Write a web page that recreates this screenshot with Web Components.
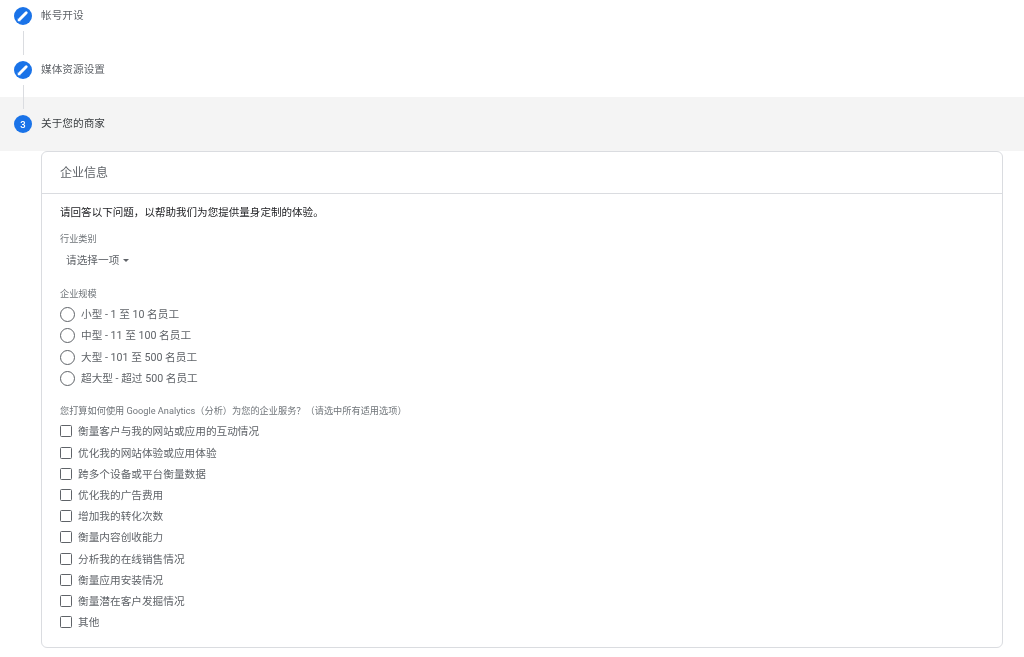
<!DOCTYPE html>
<html lang="zh-CN">
<head>
<meta charset="utf-8">
<title>关于您的商家</title>
<style>
  html, body { margin: 0; background: #fff; }
  body { font-family: Roboto, "Noto Sans CJK SC", sans-serif; overflow: hidden; height: 657px; filter: blur(0.3px); }
</style>
</head>
<body>
<setup-step state="done" class="first">帐号开设</setup-step>
<setup-step state="done" line>媒体资源设置</setup-step>
<setup-step state="current" line number="3">关于您的商家</setup-step>
<info-card heading="企业信息">
  <p-intro>请回答以下问题，以帮助我们为您提供量身定制的体验。</p-intro>
  <field-label style="height:19px">行业类别</field-label>
  <select-menu>请选择一项</select-menu>
  <field-label style="margin-top:10px;height:21px">企业规模</field-label>
  <radio-option>小型 - 1 至 10 名员工</radio-option>
  <radio-option>中型 - 11 至 100 名员工</radio-option>
  <radio-option>大型 - 101 至 500 名员工</radio-option>
  <radio-option>超大型 - 超过 500 名员工</radio-option>
  <field-label style="margin-top:11px;height:21px">您打算如何使用 Google Analytics（分析）为您的企业服务？（请选中所有适用选项）</field-label>
  <check-option>衡量客户与我的网站或应用的互动情况</check-option>
  <check-option>优化我的网站体验或应用体验</check-option>
  <check-option>跨多个设备或平台衡量数据</check-option>
  <check-option>优化我的广告费用</check-option>
  <check-option>增加我的转化次数</check-option>
  <check-option>衡量内容创收能力</check-option>
  <check-option>分析我的在线销售情况</check-option>
  <check-option>衡量应用安装情况</check-option>
  <check-option>衡量潜在客户发掘情况</check-option>
  <check-option>其他</check-option>
</info-card>

<script>
// one vertical stepper row
class SetupStep extends HTMLElement {
  constructor() {
    super();
    const shadow = this.attachShadow({ mode: 'open' });
    const done = this.getAttribute('state') === 'done';
    const badge = done
      ? `<svg viewBox="0 0 24 24" width="14" height="14"><path fill="none" stroke="#fff" stroke-width="5" stroke-linecap="round" d="M6.5 17.5 17.5 6.5"/><path fill="#fff" d="M3 21v-5l5 5z"/></svg>`
      : this.getAttribute('number');
    shadow.innerHTML = `
      <style>
        :host { display: block; height: 54px; position: relative; }
        :host(.first) { height: 43px; }
        :host([state="current"]) { background: #f4f4f4; }
        .row { display: flex; align-items: center; gap: 9px; height: 54px; padding-left: 14px; box-sizing: border-box; }
        :host(.first) .row { height: 32px; }
        .badge {
          width: 18px; height: 18px; border-radius: 50%; background: #1a73e8; color: #fff;
          display: flex; align-items: center; justify-content: center;
          font-size: 9.5px; font-weight: 500;
        }
        .label { font-size: 10.67px; color: #5f6368; white-space: nowrap; margin-bottom: 4px; }
        :host([state="current"]) .label { color: #3c4043; }
        .line { display: none; position: absolute; left: 23px; top: -12px; width: 1px; height: 24px; background: #dadce0; }
        :host([line]) .line { display: block; }
      </style>
      <div class="line"></div>
      <div class="row"><div class="badge">${badge}</div><div class="label"><slot></slot></div></div>
    `;
  }
}
customElements.define('setup-step', SetupStep);

class InfoCard extends HTMLElement {
  constructor() {
    super();
    const shadow = this.attachShadow({ mode: 'open' });
    shadow.innerHTML = `
      <style>
        :host {
          display: block; box-sizing: border-box; width: 962px; height: 497px; margin-left: 41px;
          border: 1px solid #dadce0; border-radius: 6px; background: #fff;
        }
        .head {
          height: 42px; box-sizing: border-box; padding: 0 0 2px 18px; display: flex; align-items: center;
          font-size: 12px; color: #5f6368; border-bottom: 1px solid #dadce0;
        }
        .body { padding: 0 18px; }
      </style>
      <div class="head">${this.getAttribute('heading')}</div>
      <div class="body"><slot></slot></div>
    `;
  }
}
customElements.define('info-card', InfoCard);

class PIntro extends HTMLElement {
  constructor() {
    super();
    this.attachShadow({ mode: 'open' }).innerHTML = `
      <style>
        :host { display: flex; align-items: center; height: 34px; font-size: 10.55px; color: #202124; white-space: nowrap; }
      </style><slot></slot>`;
  }
}
customElements.define('p-intro', PIntro);

class FieldLabel extends HTMLElement {
  constructor() {
    super();
    this.attachShadow({ mode: 'open' }).innerHTML = `
      <style>
        :host { display: flex; align-items: center; font-size: 9.2px; color: #70757a; white-space: nowrap; }
      </style><slot></slot>`;
  }
}
customElements.define('field-label', FieldLabel);

class SelectMenu extends HTMLElement {
  constructor() {
    super();
    this.attachShadow({ mode: 'open' }).innerHTML = `
      <style>
        :host { display: flex; align-items: center; gap: 4px; height: 25px; padding-left: 6px; font-size: 10.67px; color: #5f6368; white-space: nowrap; }
        .arrow { width: 0; height: 0; border-left: 3.5px solid transparent; border-right: 3.5px solid transparent; border-top: 3.5px solid #5f6368; margin-top: 1px; }
      </style><slot></slot><span class="arrow"></span>`;
  }
}
customElements.define('select-menu', SelectMenu);

class RadioOption extends HTMLElement {
  constructor() {
    super();
    this.attachShadow({ mode: 'open' }).innerHTML = `
      <style>
        :host { display: flex; align-items: center; gap: 6px; height: 21.33px; font-size: 10.67px; color: #5f6368; white-space: nowrap; }
        .ring { width: 15px; height: 15px; box-sizing: border-box; border: 1.7px solid #5f6368; border-radius: 50%; margin-top: 2px; }
      </style><span class="ring"></span><span><slot></slot></span>`;
  }
}
customElements.define('radio-option', RadioOption);

class CheckOption extends HTMLElement {
  constructor() {
    super();
    this.attachShadow({ mode: 'open' }).innerHTML = `
      <style>
        :host { display: flex; align-items: center; gap: 6px; height: 21.2px; font-size: 10.67px; color: #5f6368; white-space: nowrap; }
        .box { width: 12px; height: 12px; box-sizing: border-box; border: 1.6px solid #5f6368; border-radius: 1.5px; margin-top: 1px; }
      </style><span class="box"></span><span><slot></slot></span>`;
  }
}
customElements.define('check-option', CheckOption);
</script>
</body>
</html>
